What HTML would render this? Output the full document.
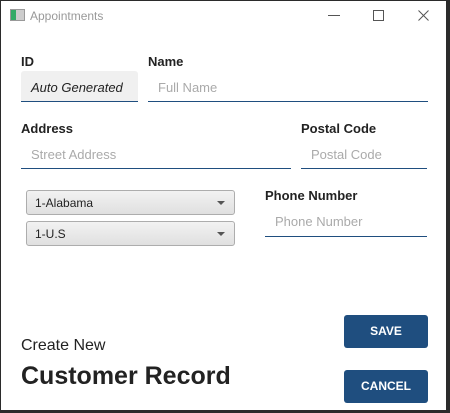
<!DOCTYPE html>
<html><head><style>
body{margin:0;width:450px;height:413px;background:#2b2b2b;position:relative;overflow:hidden;font-family:"Liberation Sans",sans-serif;}
.win{position:absolute;left:1px;top:1px;width:445px;height:409px;background:#fff;}
.a{position:absolute;white-space:nowrap;}
.lbl{font-weight:bold;font-size:13px;color:#222;}
.ph{font-size:13px;color:#aaa;}
.ul{position:absolute;height:1px;background:#1f4e7f;}
.cb{position:absolute;left:26px;width:207px;height:23px;border:1px solid #adadad;border-radius:3px;background:linear-gradient(#f2f2f2,#e0e0e0);font-size:12px;color:#222;}
.cb span{position:absolute;left:8px;top:5px;}
.cb i{position:absolute;right:9px;top:10px;border-left:4px solid transparent;border-right:4px solid transparent;border-top:4px solid #555;}
.btn{position:absolute;left:344px;width:84px;height:33px;background:#1f4e7f;border-radius:3px;color:#fff;font-weight:bold;font-size:12px;text-align:center;line-height:33px;}
</style></head><body>
<div class="win"></div>
<div class="a" style="left:10px;top:9px;width:13px;height:10px;border:1px solid #999;background:linear-gradient(90deg,#3a6 0 40%,#ccc 40%);"></div>
<div class="a" style="left:30px;top:9px;font-size:12px;color:#999;">Appointments</div>
<div class="a" style="left:328px;top:15px;width:12px;height:1px;background:#555;"></div>
<div class="a" style="left:373px;top:10px;width:9px;height:9px;border:1px solid #555;"></div>
<svg class="a" style="left:418px;top:10px;" width="11" height="11"><path d="M0.5 0.5L10.5 10.5M10.5 0.5L0.5 10.5" stroke="#555" stroke-width="1"/></svg>

<div class="a lbl" style="left:21px;top:54px;">ID</div>
<div class="a lbl" style="left:148px;top:54px;">Name</div>
<div class="a" style="left:21px;top:71px;width:117px;height:30px;background:#f0f0f0;border-radius:3px 3px 0 0;"></div>
<div class="a" style="left:31px;top:80px;font-size:13px;font-style:italic;color:#222;">Auto Generated</div>
<div class="ul" style="left:21px;top:101px;width:117px;"></div>
<div class="a ph" style="left:158px;top:80px;">Full Name</div>
<div class="ul" style="left:148px;top:101px;width:280px;"></div>

<div class="a lbl" style="left:21px;top:121px;">Address</div>
<div class="a lbl" style="left:301px;top:121px;">Postal Code</div>
<div class="a ph" style="left:31px;top:147px;">Street Address</div>
<div class="ul" style="left:21px;top:168px;width:270px;"></div>
<div class="a ph" style="left:311px;top:147px;">Postal Code</div>
<div class="ul" style="left:301px;top:168px;width:126px;"></div>

<div class="cb" style="top:190px;"><span>1-Alabama</span><i></i></div>
<div class="cb" style="top:221px;"><span>1-U.S</span><i></i></div>
<div class="a lbl" style="left:265px;top:188px;">Phone Number</div>
<div class="a ph" style="left:275px;top:214px;">Phone Number</div>
<div class="ul" style="left:265px;top:236px;width:162px;"></div>

<div class="a" style="left:21px;top:337px;font-size:16px;color:#222;">Create New</div>
<div class="a" style="left:21px;top:362px;font-size:25px;font-weight:bold;color:#222;">Customer Record</div>
<div class="btn" style="top:315px;">SAVE</div>
<div class="btn" style="top:370px;">CANCEL</div>
</body></html>
